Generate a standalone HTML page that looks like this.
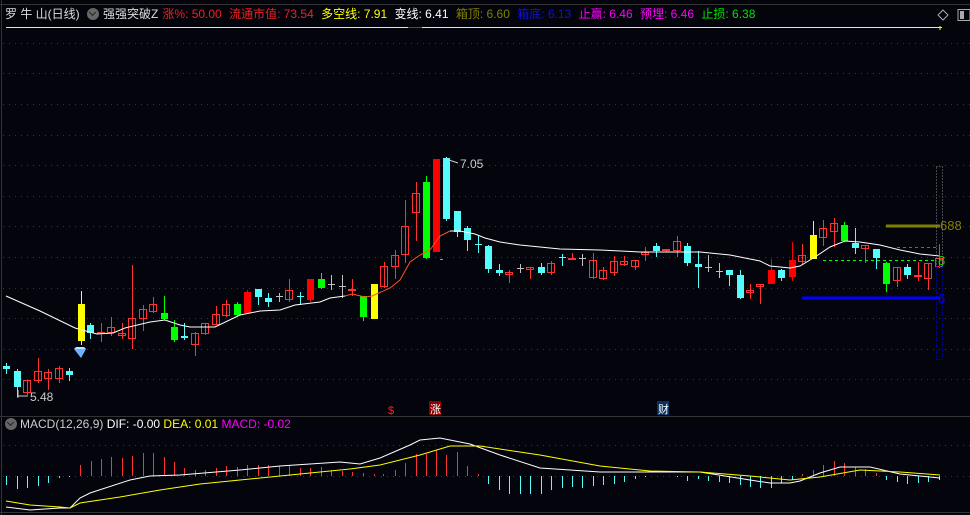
<!DOCTYPE html>
<html><head><meta charset="utf-8">
<style>
body{margin:0;background:#04040c;width:970px;height:515px;overflow:hidden;font-family:"Liberation Sans","Noto Sans CJK SC",sans-serif;}
#hd{position:absolute;left:5px;top:6px;font-size:12px;white-space:nowrap;line-height:16px;color:#ddd}
#hd span{margin-right:4px}
#md{position:absolute;left:5px;top:416px;font-size:12px;white-space:nowrap;line-height:16px}
.ci{display:inline-block;width:12px;height:12px;border-radius:50%;background:#666;vertical-align:-2px;margin-right:3px;position:relative}
.ci:after{content:"";position:absolute;left:3px;top:2px;width:4px;height:4px;border-right:1.5px solid #222;border-bottom:1.5px solid #222;transform:rotate(45deg)}
svg{position:absolute;left:0;top:0}
</style></head><body>
<svg id="s" width="970" height="515"></svg>
<div id="hd"><span>罗 牛 山(日线)</span> <span class="ci"></span><span>强强突破Z</span><span style="color:#f02020">涨%: 50.00</span> <span style="color:#f02020">流通市值: 73.54</span> <span style="color:#ffff00">多空线: 7.91</span> <span style="color:#fff">变线: 6.41</span> <span style="color:#808000">箱顶: 6.60</span> <span style="color:#1010e0">箱底: 6.13</span> <span style="color:#ff00ff">止赢: 6.46</span> <span style="color:#ff00ff">预埋: 6.46</span> <span style="color:#00e000">止损: 6.38</span></div>
<div id="md"><span class="ci"></span><span style="color:#ccc">MACD(12,26,9)</span> <span style="color:#fff">DIF: -0.00</span> <span style="color:#ffff00">DEA: 0.01</span> <span style="color:#ff00ff">MACD: -0.02</span></div>
<script>
var s='';
function L(x1,y1,x2,y2,c,w,d){s+='<line x1="'+x1+'" y1="'+y1+'" x2="'+x2+'" y2="'+y2+'" stroke="'+c+'" stroke-width="'+(w||1)+'"'+(d?' stroke-dasharray="'+d+'"':'')+'/>';}
function R(x,y,w,h,f,st){s+='<rect x="'+x+'" y="'+y+'" width="'+w+'" height="'+h+'" fill="'+f+'"'+(st?' stroke="'+st+'"':'')+'/>';}
function P(pts,c,w){s+='<polyline fill="none" stroke="'+c+'" stroke-width="'+(w||1)+'" points="'+pts.map(function(p){return p.join(',')}).join(' ')+'"/>';}
function T(x,y,t,c,sz){s+='<text x="'+x+'" y="'+y+'" fill="'+c+'" font-size="'+(sz||12)+'" font-family="Liberation Sans,Noto Sans CJK SC,sans-serif">'+t+'</text>';}
// frame
L(0,4.5,970,4.5,'#333');L(1.5,0,1.5,515,'#333');
L(0,416.5,970,416.5,'#333');L(0,512.5,970,512.5,'#333');
[43,73,104,135,165,196,226,257,288,318,349,379].forEach(function(y){L(3,y+.5,970,y+.5,'#3a3a3a',1,'1 5');});
L(6,27.5,942,27.5,'#ffff00');L(408,27.5,422,27.5,'#c000c0');L(940,26,940,30,'#ffff00');
L(3,445.5,970,445.5,'#3a3a3a',1,'1 5');L(3,476.5,970,476.5,'#3a3a3a',1,'1 5');
// candles: x, top, bottom, high, low, type
var C=[[6,366,369,363,374,'c'],[17,371,387,369,397,'c'],[27,380,393,380,395,'r'],[38,371,381,358,383,'r'],[48,372,379,369,390,'r'],[59,368,379,366,383,'r'],[69,371,375,368,381,'c'],
[81,304,341,291,345,'y'],[90,325,333,323,339,'c'],[101,332,334,323,342,'r'],[111,327,333,317,336,'r'],[122,333,336,323,339,'r'],[132,318,339,265,349,'r'],[143,309,319,305,331,'r'],[153,304,312,297,313,'r'],[164,313,319,296,320,'g'],[174,327,340,320,342,'g'],[184,336,338,323,340,'c'],[195,333,345,332,356,'r'],[205,323,334,323,335,'r'],[216,314,325,306,325,'r'],[226,304,316,300,317,'r'],[237,304,315,302,316,'g'],[247,292,313,290,314,'R'],[258,289,297,289,305,'c'],[268,298,302,293,307,'c'],[279,296,297,293,302,'w'],[289,290,300,279,302,'r'],[300,296,297,292,305,'c'],[310,279,300,279,302,'R'],[321,279,288,273,289,'g'],[331,284,285,275,290,'w'],[342,286,287,275,298,'w'],[352,289,291,279,296,'r'],[363,296,317,296,321,'g'],[374,284,319,284,319,'y'],[384,266,287,262,288,'r'],[395,255,267,250,279,'r'],[405,226,255,200,263,'r'],[416,193,213,182,241,'r'],[426,182,258,176,259,'g'],[436,159,252,159,252,'R'],[446,158,219,157,221,'c'],[457,211,232,211,237,'c'],[467,228,240,226,251,'c'],[478,244,245,235,253,'c'],
[488,246,269,245,273,'c'],[499,270,273,264,276,'c'],[509,272,275,270,283,'r'],[520,268,269,264,273,'w'],[530,267,270,267,279,'r'],[541,267,273,263,275,'c'],[551,263,273,261,275,'r'],[562,257,258,254,266,'c'],[572,258,260,253,260,'r'],[582,258,259,254,266,'w'],[593,260,278,253,279,'r'],[603,270,279,267,280,'r'],[614,261,273,256,276,'r'],[624,261,265,256,266,'r'],[635,260,267,260,270,'r'],[645,252,255,247,261,'r'],[656,246,251,243,257,'c'],[666,249,251,249,252,'r'],[677,241,251,236,257,'r'],[687,246,263,243,266,'c'],[698,264,267,251,288,'c'],[708,267,268,255,272,'w'],[719,271,272,263,278,'w'],[729,270,275,270,286,'c'],[740,275,298,270,299,'c'],[750,290,293,284,299,'r'],[760,284,287,284,304,'r'],[771,270,284,259,284,'R'],[781,270,278,269,281,'c'],[792,260,277,242,281,'R'],[802,255,262,244,264,'r'],[813,235,259,221,259,'y'],[823,228,238,220,246,'r'],[834,223,232,218,247,'r'],[844,225,241,222,242,'g'],[855,243,248,228,254,'c'],[865,245,249,245,263,'r'],[876,249,258,249,269,'c'],[886,263,284,262,292,'g'],[897,267,281,267,287,'r'],[907,267,275,264,279,'c'],[918,275,277,262,281,'r'],[928,263,279,263,290,'r'],[939,258,267,244,268,'r']];
var col={c:'#54fcfc',r:'#ff3232',R:'#ff0000',g:'#00ff00',y:'#ffff00',w:'#c0c0c0'};
C.forEach(function(k){var x=k[0],c=col[k[5]];L(x+.5,k[3],x+.5,k[4],c);
 var h=Math.max(1,k[2]-k[1]);
 if(k[5]=='r'){R(x-3.5,k[1]+.5,7,h-1,'none',c);} else if(k[5]=='w'){L(x-3,k[1]+.5,x+4,k[1]+.5,c);} else R(x-3,k[1],7,h,c);});
// MA
var ma=[[6,296],[40,311],[75,328],[97,334],[113,333],[125,328],[150,322],[165,320],[180,325],[190,327],[215,327],[240,315],[260,311],[280,310],[295,305],[320,302],[330,298],[345,296]];
var ma2=[[345,296],[352,294],[365,297],[372,296],[390,288],[400,280],[410,262],[420,255],[430,250],[440,236],[450,231]];
var ma3=[[450,231],[460,231],[475,234],[485,238],[500,242],[520,245],[560,249],[600,250],[640,252],[700,252],[730,255],[760,261],[770,266],[790,268],[800,266],[815,257],[830,247],[845,241],[860,242],[880,245],[900,250],[920,254],[940,256]];
P(ma,'#fff');P(ma2,'#ff5020');P(ma3,'#fff');
L(440,259.5,446,259.5,'#00ff00',1,'3 3');
// guides
L(886,226,940,226,'#808000',3);T(940,230,'688','#808000',13);
L(897,247.5,937,247.5,'#ff00ff',1,'3 3');L(823,260.5,937,260.5,'#00ff00',1,'3 3');T(938,265,'8','#00e000',13);
L(802,298,940,298,'#0000ff',3);T(938,303,'6','#0000ff',13);
s+='<rect x="936.5" y="166.5" width="6" height="100" fill="none" stroke="#888" stroke-dasharray="1 2"/>';
s+='<rect x="936.5" y="266.5" width="6" height="93" fill="none" stroke="#0000ff" stroke-dasharray="1 2"/>';
L(939.5,244,939.5,258,'#ff3232');
// labels
T(460,168,'7.05','#ccc',12);L(449,160,458,163,'#ccc');
T(30,401,'5.48','#ccc',12);L(18,396,28,396,'#ccc');L(18,390,18,398,'#ccc');
s+='<path d="M74 349 L86 349 L81 358 Z" fill="#6ab4ff"/><path d="M74 349 L86 349 L84 347 L76 347Z" fill="#bfe0ff"/>';
T(388,414,'$','#ff2020',11);
R(429,401,12,14,'#8a0000');T(430,413,'涨','#fff',11);
R(657,401,12,14,'#0a3060');T(658,413,'财','#fff',11);
// MACD hist
var H=[[6,-9],[17,-13],[27,-12],[38,-10],[48,-7],[59,-2],[69,-1],[80,11],[91,15],[101,17],[111,19],[122,18],[132,20],[143,23],[153,23],[164,19],[174,14],[184,8],[195,6],[205,6],[216,8],[226,10],[237,9],[247,11],[258,11],[268,11],[279,10],[289,10],[300,8],[310,8],[321,9],[331,6],[342,5],[352,4],[363,3],[374,2],[383,2],[395,6],[405,13],[416,22],[426,22],[436,26],[446,21],[457,24],[467,10],[478,2],
[488,-8],[499,-14],[509,-18],[520,-18],[530,-18],[541,-18],[551,-14],[562,-12],[572,-11],[582,-12],[593,-10],[603,-9],[614,-8],[624,-6],[635,-3],[645,-1],[677,-1],[687,-5],[698,-3],[708,-5],[719,-6],[729,-7],[740,-9],[750,-11],[760,-12],[771,-12],[781,-7],[792,-4],[802,2],[813,6],[823,11],[834,15],[844,13],[855,9],[865,7],[876,3],[886,-4],[897,-6],[907,-8],[918,-7],[928,-6],[939,-4]];
H.forEach(function(h){L(h[0]+.5,476,h[0]+.5,476-h[1],h[1]>0?'#ff3232':'#54fcfc');});
P([[6,507],[30,510],[60,508],[70,508],[80,498],[90,493],[130,480],[150,476],[180,475],[240,470],[280,466],[340,462],[360,464],[380,458],[410,445],[420,440],[440,438],[470,444],[500,455],[540,468],[600,472],[700,472],[750,480],[770,483],[790,483],[800,481],[820,473],[840,467],[870,467],[900,474],[940,478]],'#fff');
P([[6,501],[30,505],[60,507],[70,508],[80,503],[120,497],[160,490],[200,484],[250,479],[300,474],[350,469],[380,465],[420,455],[450,446],[480,446],[540,455],[600,466],[650,471],[700,472],[750,476],[790,480],[820,477],[860,470],[900,472],[940,475]],'#ffff00');
// top-right icons
s+='<path d="M943 10 L948 15 L943 20 L938 15Z" fill="none" stroke="#aaa"/>';
R(958,9.5,12,11,'none','#aaa');R(960,11,4,8,'#aaa');
document.getElementById('s').innerHTML=s;
</script>
</body></html>
